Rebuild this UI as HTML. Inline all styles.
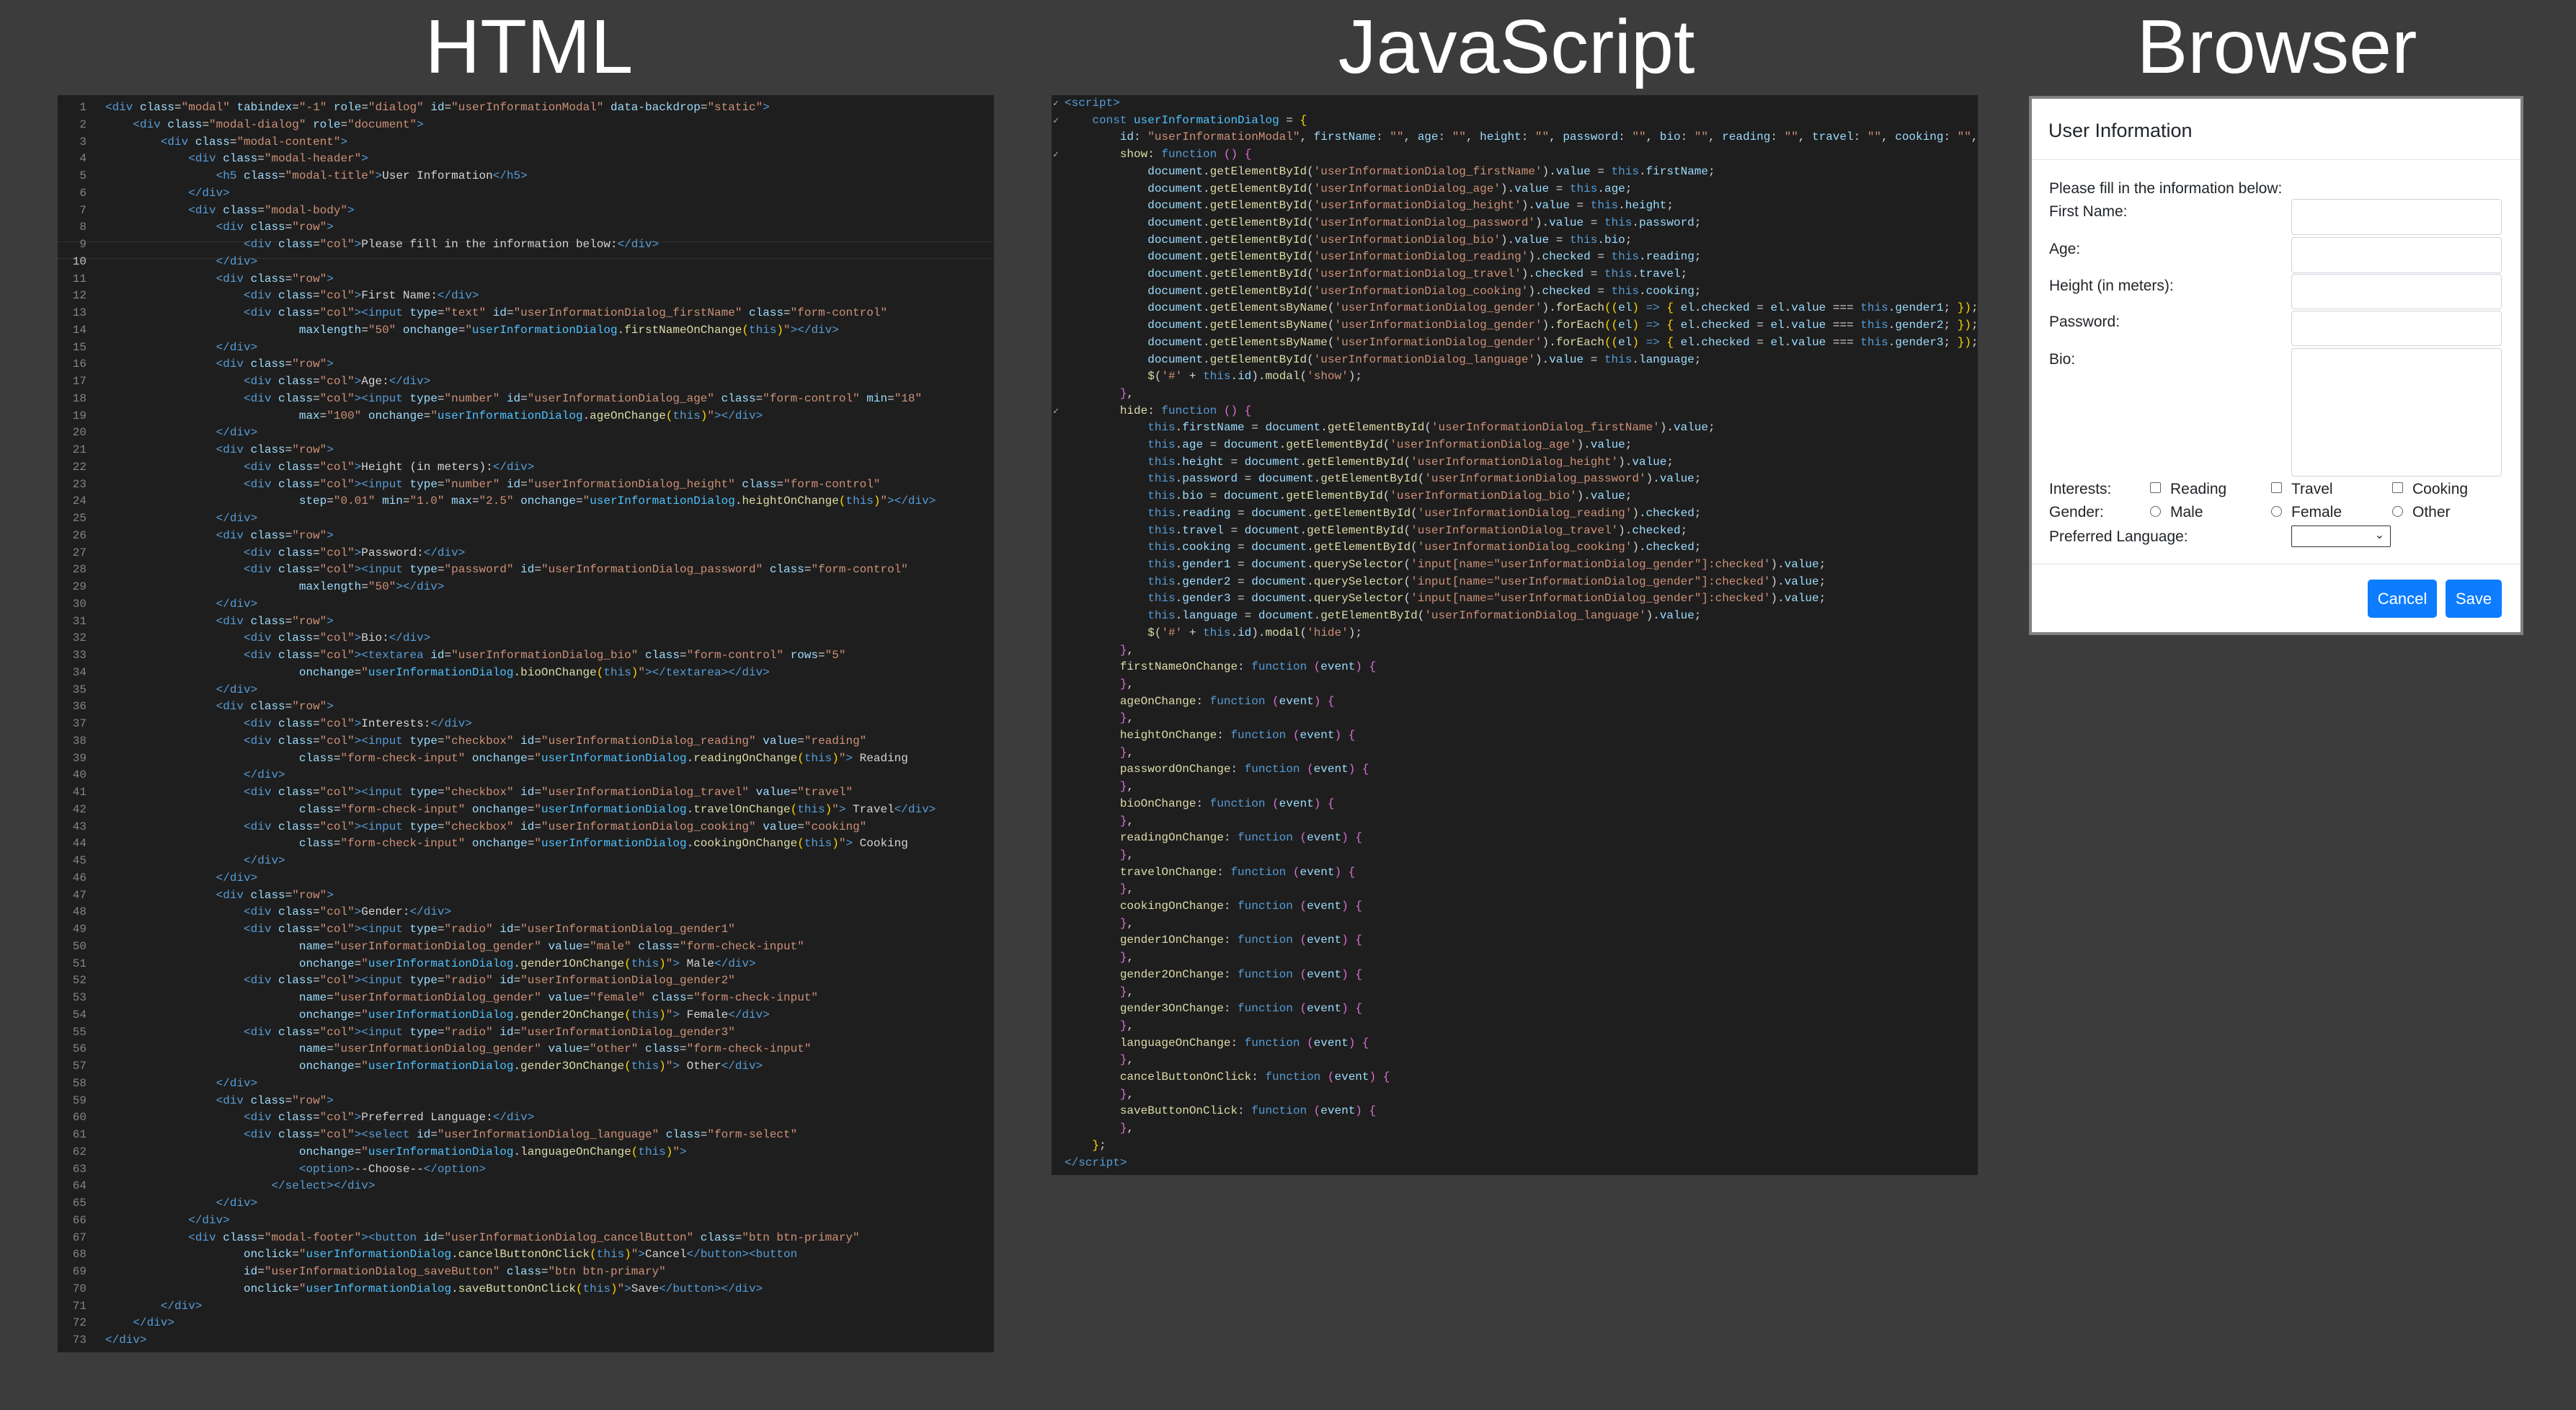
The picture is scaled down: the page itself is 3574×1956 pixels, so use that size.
<!DOCTYPE html>
<html><head><meta charset="utf-8">
<style>
*{margin:0;padding:0;box-sizing:border-box}
body{width:3574px;height:1956px;background:#3c3c3c;position:relative;overflow:hidden;font-family:"Liberation Sans",sans-serif}
.title{position:absolute;top:0px;color:#fff;font-size:106px;font-family:"Liberation Sans",sans-serif;line-height:130px;transform:translateX(-50%);white-space:nowrap}
.panel{position:absolute;background:#1e1e1e;overflow:hidden}
pre{font-family:"Liberation Mono",monospace;font-size:16px;color:#d4d4d4;white-space:pre;position:absolute}
tg{color:#569cd6}at{color:#9cdcfe}st{color:#ce9178}fn{color:#dcdcaa}vr{color:#4fc1ff}yb{color:#ffd700}pb{color:#da70d6}
.ln{color:#858585;text-align:right;width:40px}
.modal{position:absolute;left:2815px;top:133px;width:686px;height:748px;background:#808080;padding:4px}
.mi{background:#fff;width:100%;height:100%;position:relative;color:#212529;font-size:21px}
.mi div{position:absolute}
.inp{border:1px solid #ced4da;border-radius:4px;left:360px;width:292px}
.lab{left:24px}
.cb{width:15px;height:15px;border:1px solid #666;border-radius:2px}
.rb{width:15px;height:15px;border:1px solid #666;border-radius:50%}
.btn{background:#0d7cff;color:#fff;border-radius:5px;text-align:center;line-height:53px;font-size:22px}
</style></head><body>
<div class="title" style="left:734px">HTML</div>
<div class="title" style="left:2104px">JavaScript</div>
<div class="title" style="left:3159px">Browser</div>

<div class="panel" style="left:80px;top:132px;width:1299px;height:1744px">
<div style="position:absolute;left:0;top:203px;width:1299px;height:24px;border-top:1px solid #333;border-bottom:1px solid #333"></div>
<pre class="ln" style="left:0;top:6px;line-height:23.75px">1
2
3
4
5
6
7
8
9
<span style="color:#c6c6c6">10</span>
11
12
13
14
15
16
17
18
19
20
21
22
23
24
25
26
27
28
29
30
31
32
33
34
35
36
37
38
39
40
41
42
43
44
45
46
47
48
49
50
51
52
53
54
55
56
57
58
59
60
61
62
63
64
65
66
67
68
69
70
71
72
73</pre>
<pre style="left:66px;top:6px;line-height:23.75px"><tg>&lt;div</tg> <at>class</at>=<st>"modal"</st> <at>tabindex</at>=<st>"-1"</st> <at>role</at>=<st>"dialog"</st> <at>id</at>=<st>"userInformationModal"</st> <at>data-backdrop</at>=<st>"static"</st><tg>&gt;</tg>
    <tg>&lt;div</tg> <at>class</at>=<st>"modal-dialog"</st> <at>role</at>=<st>"document"</st><tg>&gt;</tg>
        <tg>&lt;div</tg> <at>class</at>=<st>"modal-content"</st><tg>&gt;</tg>
            <tg>&lt;div</tg> <at>class</at>=<st>"modal-header"</st><tg>&gt;</tg>
                <tg>&lt;h5</tg> <at>class</at>=<st>"modal-title"</st><tg>&gt;</tg>User Information<tg>&lt;/h5&gt;</tg>
            <tg>&lt;/div&gt;</tg>
            <tg>&lt;div</tg> <at>class</at>=<st>"modal-body"</st><tg>&gt;</tg>
                <tg>&lt;div</tg> <at>class</at>=<st>"row"</st><tg>&gt;</tg>
                    <tg>&lt;div</tg> <at>class</at>=<st>"col"</st><tg>&gt;</tg>Please fill in the information below:<tg>&lt;/div&gt;</tg>
                <tg>&lt;/div&gt;</tg>
                <tg>&lt;div</tg> <at>class</at>=<st>"row"</st><tg>&gt;</tg>
                    <tg>&lt;div</tg> <at>class</at>=<st>"col"</st><tg>&gt;</tg>First Name:<tg>&lt;/div&gt;</tg>
                    <tg>&lt;div</tg> <at>class</at>=<st>"col"</st><tg>&gt;&lt;input</tg> <at>type</at>=<st>"text"</st> <at>id</at>=<st>"userInformationDialog_firstName"</st> <at>class</at>=<st>"form-control"</st>
                            <at>maxlength</at>=<st>"50"</st> <at>onchange</at>=<st>"</st><vr>userInformationDialog</vr>.<fn>firstNameOnChange</fn><yb>(</yb><tg>this</tg><yb>)</yb><st>"</st><tg>&gt;&lt;/div&gt;</tg>
                <tg>&lt;/div&gt;</tg>
                <tg>&lt;div</tg> <at>class</at>=<st>"row"</st><tg>&gt;</tg>
                    <tg>&lt;div</tg> <at>class</at>=<st>"col"</st><tg>&gt;</tg>Age:<tg>&lt;/div&gt;</tg>
                    <tg>&lt;div</tg> <at>class</at>=<st>"col"</st><tg>&gt;&lt;input</tg> <at>type</at>=<st>"number"</st> <at>id</at>=<st>"userInformationDialog_age"</st> <at>class</at>=<st>"form-control"</st> <at>min</at>=<st>"18"</st>
                            <at>max</at>=<st>"100"</st> <at>onchange</at>=<st>"</st><vr>userInformationDialog</vr>.<fn>ageOnChange</fn><yb>(</yb><tg>this</tg><yb>)</yb><st>"</st><tg>&gt;&lt;/div&gt;</tg>
                <tg>&lt;/div&gt;</tg>
                <tg>&lt;div</tg> <at>class</at>=<st>"row"</st><tg>&gt;</tg>
                    <tg>&lt;div</tg> <at>class</at>=<st>"col"</st><tg>&gt;</tg>Height (in meters):<tg>&lt;/div&gt;</tg>
                    <tg>&lt;div</tg> <at>class</at>=<st>"col"</st><tg>&gt;&lt;input</tg> <at>type</at>=<st>"number"</st> <at>id</at>=<st>"userInformationDialog_height"</st> <at>class</at>=<st>"form-control"</st>
                            <at>step</at>=<st>"0.01"</st> <at>min</at>=<st>"1.0"</st> <at>max</at>=<st>"2.5"</st> <at>onchange</at>=<st>"</st><vr>userInformationDialog</vr>.<fn>heightOnChange</fn><yb>(</yb><tg>this</tg><yb>)</yb><st>"</st><tg>&gt;&lt;/div&gt;</tg>
                <tg>&lt;/div&gt;</tg>
                <tg>&lt;div</tg> <at>class</at>=<st>"row"</st><tg>&gt;</tg>
                    <tg>&lt;div</tg> <at>class</at>=<st>"col"</st><tg>&gt;</tg>Password:<tg>&lt;/div&gt;</tg>
                    <tg>&lt;div</tg> <at>class</at>=<st>"col"</st><tg>&gt;&lt;input</tg> <at>type</at>=<st>"password"</st> <at>id</at>=<st>"userInformationDialog_password"</st> <at>class</at>=<st>"form-control"</st>
                            <at>maxlength</at>=<st>"50"</st><tg>&gt;&lt;/div&gt;</tg>
                <tg>&lt;/div&gt;</tg>
                <tg>&lt;div</tg> <at>class</at>=<st>"row"</st><tg>&gt;</tg>
                    <tg>&lt;div</tg> <at>class</at>=<st>"col"</st><tg>&gt;</tg>Bio:<tg>&lt;/div&gt;</tg>
                    <tg>&lt;div</tg> <at>class</at>=<st>"col"</st><tg>&gt;&lt;textarea</tg> <at>id</at>=<st>"userInformationDialog_bio"</st> <at>class</at>=<st>"form-control"</st> <at>rows</at>=<st>"5"</st>
                            <at>onchange</at>=<st>"</st><vr>userInformationDialog</vr>.<fn>bioOnChange</fn><yb>(</yb><tg>this</tg><yb>)</yb><st>"</st><tg>&gt;&lt;/textarea&gt;&lt;/div&gt;</tg>
                <tg>&lt;/div&gt;</tg>
                <tg>&lt;div</tg> <at>class</at>=<st>"row"</st><tg>&gt;</tg>
                    <tg>&lt;div</tg> <at>class</at>=<st>"col"</st><tg>&gt;</tg>Interests:<tg>&lt;/div&gt;</tg>
                    <tg>&lt;div</tg> <at>class</at>=<st>"col"</st><tg>&gt;&lt;input</tg> <at>type</at>=<st>"checkbox"</st> <at>id</at>=<st>"userInformationDialog_reading"</st> <at>value</at>=<st>"reading"</st>
                            <at>class</at>=<st>"form-check-input"</st> <at>onchange</at>=<st>"</st><vr>userInformationDialog</vr>.<fn>readingOnChange</fn><yb>(</yb><tg>this</tg><yb>)</yb><st>"</st><tg>&gt;</tg> Reading
                    <tg>&lt;/div&gt;</tg>
                    <tg>&lt;div</tg> <at>class</at>=<st>"col"</st><tg>&gt;&lt;input</tg> <at>type</at>=<st>"checkbox"</st> <at>id</at>=<st>"userInformationDialog_travel"</st> <at>value</at>=<st>"travel"</st>
                            <at>class</at>=<st>"form-check-input"</st> <at>onchange</at>=<st>"</st><vr>userInformationDialog</vr>.<fn>travelOnChange</fn><yb>(</yb><tg>this</tg><yb>)</yb><st>"</st><tg>&gt;</tg> Travel<tg>&lt;/div&gt;</tg>
                    <tg>&lt;div</tg> <at>class</at>=<st>"col"</st><tg>&gt;&lt;input</tg> <at>type</at>=<st>"checkbox"</st> <at>id</at>=<st>"userInformationDialog_cooking"</st> <at>value</at>=<st>"cooking"</st>
                            <at>class</at>=<st>"form-check-input"</st> <at>onchange</at>=<st>"</st><vr>userInformationDialog</vr>.<fn>cookingOnChange</fn><yb>(</yb><tg>this</tg><yb>)</yb><st>"</st><tg>&gt;</tg> Cooking
                    <tg>&lt;/div&gt;</tg>
                <tg>&lt;/div&gt;</tg>
                <tg>&lt;div</tg> <at>class</at>=<st>"row"</st><tg>&gt;</tg>
                    <tg>&lt;div</tg> <at>class</at>=<st>"col"</st><tg>&gt;</tg>Gender:<tg>&lt;/div&gt;</tg>
                    <tg>&lt;div</tg> <at>class</at>=<st>"col"</st><tg>&gt;&lt;input</tg> <at>type</at>=<st>"radio"</st> <at>id</at>=<st>"userInformationDialog_gender1"</st>
                            <at>name</at>=<st>"userInformationDialog_gender"</st> <at>value</at>=<st>"male"</st> <at>class</at>=<st>"form-check-input"</st>
                            <at>onchange</at>=<st>"</st><vr>userInformationDialog</vr>.<fn>gender1OnChange</fn><yb>(</yb><tg>this</tg><yb>)</yb><st>"</st><tg>&gt;</tg> Male<tg>&lt;/div&gt;</tg>
                    <tg>&lt;div</tg> <at>class</at>=<st>"col"</st><tg>&gt;&lt;input</tg> <at>type</at>=<st>"radio"</st> <at>id</at>=<st>"userInformationDialog_gender2"</st>
                            <at>name</at>=<st>"userInformationDialog_gender"</st> <at>value</at>=<st>"female"</st> <at>class</at>=<st>"form-check-input"</st>
                            <at>onchange</at>=<st>"</st><vr>userInformationDialog</vr>.<fn>gender2OnChange</fn><yb>(</yb><tg>this</tg><yb>)</yb><st>"</st><tg>&gt;</tg> Female<tg>&lt;/div&gt;</tg>
                    <tg>&lt;div</tg> <at>class</at>=<st>"col"</st><tg>&gt;&lt;input</tg> <at>type</at>=<st>"radio"</st> <at>id</at>=<st>"userInformationDialog_gender3"</st>
                            <at>name</at>=<st>"userInformationDialog_gender"</st> <at>value</at>=<st>"other"</st> <at>class</at>=<st>"form-check-input"</st>
                            <at>onchange</at>=<st>"</st><vr>userInformationDialog</vr>.<fn>gender3OnChange</fn><yb>(</yb><tg>this</tg><yb>)</yb><st>"</st><tg>&gt;</tg> Other<tg>&lt;/div&gt;</tg>
                <tg>&lt;/div&gt;</tg>
                <tg>&lt;div</tg> <at>class</at>=<st>"row"</st><tg>&gt;</tg>
                    <tg>&lt;div</tg> <at>class</at>=<st>"col"</st><tg>&gt;</tg>Preferred Language:<tg>&lt;/div&gt;</tg>
                    <tg>&lt;div</tg> <at>class</at>=<st>"col"</st><tg>&gt;&lt;select</tg> <at>id</at>=<st>"userInformationDialog_language"</st> <at>class</at>=<st>"form-select"</st>
                            <at>onchange</at>=<st>"</st><vr>userInformationDialog</vr>.<fn>languageOnChange</fn><yb>(</yb><tg>this</tg><yb>)</yb><st>"</st><tg>&gt;</tg>
                            <tg>&lt;option&gt;</tg>--Choose--<tg>&lt;/option&gt;</tg>
                        <tg>&lt;/select&gt;&lt;/div&gt;</tg>
                <tg>&lt;/div&gt;</tg>
            <tg>&lt;/div&gt;</tg>
            <tg>&lt;div</tg> <at>class</at>=<st>"modal-footer"</st><tg>&gt;&lt;button</tg> <at>id</at>=<st>"userInformationDialog_cancelButton"</st> <at>class</at>=<st>"btn btn-primary"</st>
                    <at>onclick</at>=<st>"</st><vr>userInformationDialog</vr>.<fn>cancelButtonOnClick</fn><yb>(</yb><tg>this</tg><yb>)</yb><st>"</st><tg>&gt;</tg>Cancel<tg>&lt;/button&gt;&lt;button</tg>
                    <at>id</at>=<st>"userInformationDialog_saveButton"</st> <at>class</at>=<st>"btn btn-primary"</st>
                    <at>onclick</at>=<st>"</st><vr>userInformationDialog</vr>.<fn>saveButtonOnClick</fn><yb>(</yb><tg>this</tg><yb>)</yb><st>"</st><tg>&gt;</tg>Save<tg>&lt;/button&gt;&lt;/div&gt;</tg>
        <tg>&lt;/div&gt;</tg>
    <tg>&lt;/div&gt;</tg>
<tg>&lt;/div&gt;</tg></pre>
</div>

<div class="panel" style="left:1459px;top:132px;width:1285px;height:1498px">
<pre style="left:2px;top:0;line-height:23.7px;color:#b0b0b0;font-size:13px">✓
✓

✓














✓</pre>
<pre style="left:18px;top:0;line-height:23.7px"><tg>&lt;script&gt;</tg>
    <tg>const</tg> <vr>userInformationDialog</vr> = <yb>{</yb>
        <at>id</at>: <st>"userInformationModal"</st>, <at>firstName</at>: <st>""</st>, <at>age</at>: <st>""</st>, <at>height</at>: <st>""</st>, <at>password</at>: <st>""</st>, <at>bio</at>: <st>""</st>, <at>reading</at>: <st>""</st>, <at>travel</at>: <st>""</st>, <at>cooking</at>: <st>""</st>, <at>gender1</at>: <st>""</st>
        <fn>show</fn>: <tg>function</tg> <pb>()</pb> <pb>{</pb>
            <at>document</at>.<fn>getElementById</fn>(<st>'userInformationDialog_firstName'</st>).<at>value</at> = <tg>this</tg>.<at>firstName</at>;
            <at>document</at>.<fn>getElementById</fn>(<st>'userInformationDialog_age'</st>).<at>value</at> = <tg>this</tg>.<at>age</at>;
            <at>document</at>.<fn>getElementById</fn>(<st>'userInformationDialog_height'</st>).<at>value</at> = <tg>this</tg>.<at>height</at>;
            <at>document</at>.<fn>getElementById</fn>(<st>'userInformationDialog_password'</st>).<at>value</at> = <tg>this</tg>.<at>password</at>;
            <at>document</at>.<fn>getElementById</fn>(<st>'userInformationDialog_bio'</st>).<at>value</at> = <tg>this</tg>.<at>bio</at>;
            <at>document</at>.<fn>getElementById</fn>(<st>'userInformationDialog_reading'</st>).<at>checked</at> = <tg>this</tg>.<at>reading</at>;
            <at>document</at>.<fn>getElementById</fn>(<st>'userInformationDialog_travel'</st>).<at>checked</at> = <tg>this</tg>.<at>travel</at>;
            <at>document</at>.<fn>getElementById</fn>(<st>'userInformationDialog_cooking'</st>).<at>checked</at> = <tg>this</tg>.<at>cooking</at>;
            <at>document</at>.<fn>getElementsByName</fn>(<st>'userInformationDialog_gender'</st>).<fn>forEach</fn><yb>((</yb><at>el</at><yb>)</yb> <tg>=&gt;</tg> <yb>{</yb> <at>el</at>.<at>checked</at> = <at>el</at>.<at>value</at> === <tg>this</tg>.<at>gender1</at>; <yb>})</yb>;
            <at>document</at>.<fn>getElementsByName</fn>(<st>'userInformationDialog_gender'</st>).<fn>forEach</fn><yb>((</yb><at>el</at><yb>)</yb> <tg>=&gt;</tg> <yb>{</yb> <at>el</at>.<at>checked</at> = <at>el</at>.<at>value</at> === <tg>this</tg>.<at>gender2</at>; <yb>})</yb>;
            <at>document</at>.<fn>getElementsByName</fn>(<st>'userInformationDialog_gender'</st>).<fn>forEach</fn><yb>((</yb><at>el</at><yb>)</yb> <tg>=&gt;</tg> <yb>{</yb> <at>el</at>.<at>checked</at> = <at>el</at>.<at>value</at> === <tg>this</tg>.<at>gender3</at>; <yb>})</yb>;
            <at>document</at>.<fn>getElementById</fn>(<st>'userInformationDialog_language'</st>).<at>value</at> = <tg>this</tg>.<at>language</at>;
            <fn>$</fn>(<st>'#'</st> + <tg>this</tg>.<at>id</at>).<fn>modal</fn>(<st>'show'</st>);
        <pb>}</pb>,
        <fn>hide</fn>: <tg>function</tg> <pb>()</pb> <pb>{</pb>
            <tg>this</tg>.<at>firstName</at> = <at>document</at>.<fn>getElementById</fn>(<st>'userInformationDialog_firstName'</st>).<at>value</at>;
            <tg>this</tg>.<at>age</at> = <at>document</at>.<fn>getElementById</fn>(<st>'userInformationDialog_age'</st>).<at>value</at>;
            <tg>this</tg>.<at>height</at> = <at>document</at>.<fn>getElementById</fn>(<st>'userInformationDialog_height'</st>).<at>value</at>;
            <tg>this</tg>.<at>password</at> = <at>document</at>.<fn>getElementById</fn>(<st>'userInformationDialog_password'</st>).<at>value</at>;
            <tg>this</tg>.<at>bio</at> = <at>document</at>.<fn>getElementById</fn>(<st>'userInformationDialog_bio'</st>).<at>value</at>;
            <tg>this</tg>.<at>reading</at> = <at>document</at>.<fn>getElementById</fn>(<st>'userInformationDialog_reading'</st>).<at>checked</at>;
            <tg>this</tg>.<at>travel</at> = <at>document</at>.<fn>getElementById</fn>(<st>'userInformationDialog_travel'</st>).<at>checked</at>;
            <tg>this</tg>.<at>cooking</at> = <at>document</at>.<fn>getElementById</fn>(<st>'userInformationDialog_cooking'</st>).<at>checked</at>;
            <tg>this</tg>.<at>gender1</at> = <at>document</at>.<fn>querySelector</fn>(<st>'input[name="userInformationDialog_gender"]:checked'</st>).<at>value</at>;
            <tg>this</tg>.<at>gender2</at> = <at>document</at>.<fn>querySelector</fn>(<st>'input[name="userInformationDialog_gender"]:checked'</st>).<at>value</at>;
            <tg>this</tg>.<at>gender3</at> = <at>document</at>.<fn>querySelector</fn>(<st>'input[name="userInformationDialog_gender"]:checked'</st>).<at>value</at>;
            <tg>this</tg>.<at>language</at> = <at>document</at>.<fn>getElementById</fn>(<st>'userInformationDialog_language'</st>).<at>value</at>;
            <fn>$</fn>(<st>'#'</st> + <tg>this</tg>.<at>id</at>).<fn>modal</fn>(<st>'hide'</st>);
        <pb>}</pb>,
        <fn>firstNameOnChange</fn>: <tg>function</tg> <pb>(</pb><at>event</at><pb>)</pb> <pb>{</pb>
        <pb>}</pb>,
        <fn>ageOnChange</fn>: <tg>function</tg> <pb>(</pb><at>event</at><pb>)</pb> <pb>{</pb>
        <pb>}</pb>,
        <fn>heightOnChange</fn>: <tg>function</tg> <pb>(</pb><at>event</at><pb>)</pb> <pb>{</pb>
        <pb>}</pb>,
        <fn>passwordOnChange</fn>: <tg>function</tg> <pb>(</pb><at>event</at><pb>)</pb> <pb>{</pb>
        <pb>}</pb>,
        <fn>bioOnChange</fn>: <tg>function</tg> <pb>(</pb><at>event</at><pb>)</pb> <pb>{</pb>
        <pb>}</pb>,
        <fn>readingOnChange</fn>: <tg>function</tg> <pb>(</pb><at>event</at><pb>)</pb> <pb>{</pb>
        <pb>}</pb>,
        <fn>travelOnChange</fn>: <tg>function</tg> <pb>(</pb><at>event</at><pb>)</pb> <pb>{</pb>
        <pb>}</pb>,
        <fn>cookingOnChange</fn>: <tg>function</tg> <pb>(</pb><at>event</at><pb>)</pb> <pb>{</pb>
        <pb>}</pb>,
        <fn>gender1OnChange</fn>: <tg>function</tg> <pb>(</pb><at>event</at><pb>)</pb> <pb>{</pb>
        <pb>}</pb>,
        <fn>gender2OnChange</fn>: <tg>function</tg> <pb>(</pb><at>event</at><pb>)</pb> <pb>{</pb>
        <pb>}</pb>,
        <fn>gender3OnChange</fn>: <tg>function</tg> <pb>(</pb><at>event</at><pb>)</pb> <pb>{</pb>
        <pb>}</pb>,
        <fn>languageOnChange</fn>: <tg>function</tg> <pb>(</pb><at>event</at><pb>)</pb> <pb>{</pb>
        <pb>}</pb>,
        <fn>cancelButtonOnClick</fn>: <tg>function</tg> <pb>(</pb><at>event</at><pb>)</pb> <pb>{</pb>
        <pb>}</pb>,
        <fn>saveButtonOnClick</fn>: <tg>function</tg> <pb>(</pb><at>event</at><pb>)</pb> <pb>{</pb>
        <pb>}</pb>,
    <yb>}</yb>;
<tg>&lt;/script&gt;</tg></pre>
</div>

<div class="modal">
<div class="mi">
<div style="left:23px;top:29px;font-size:27px">User Information</div>
<div style="left:0;right:0;top:84px;border-top:1px solid #dee2e6"></div>
<div class="lab" style="top:113px">Please fill in the information below:</div>
<div class="lab" style="top:145px">First Name:</div>
<div class="inp" style="top:139px;height:50px"></div>
<div class="lab" style="top:197px">Age:</div>
<div class="inp" style="top:192px;height:50px"></div>
<div class="lab" style="top:248px">Height (in meters):</div>
<div class="inp" style="top:243px;height:49px"></div>
<div class="lab" style="top:298px">Password:</div>
<div class="inp" style="top:294px;height:49px"></div>
<div class="lab" style="top:350px">Bio:</div>
<div class="inp" style="top:346px;height:178px"></div>
<div class="lab" style="top:530px">Interests:</div>
<div class="cb" style="left:164px;top:532px"></div><div style="left:192px;top:530px">Reading</div>
<div class="cb" style="left:332px;top:532px"></div><div style="left:360px;top:530px">Travel</div>
<div class="cb" style="left:500px;top:532px"></div><div style="left:528px;top:530px">Cooking</div>
<div class="lab" style="top:562px">Gender:</div>
<div class="rb" style="left:164px;top:565px"></div><div style="left:192px;top:562px">Male</div>
<div class="rb" style="left:332px;top:565px"></div><div style="left:360px;top:562px">Female</div>
<div class="rb" style="left:500px;top:565px"></div><div style="left:528px;top:562px">Other</div>
<div class="lab" style="top:596px">Preferred Language:</div>
<div style="left:360px;top:592px;width:138px;height:30px;border:1px solid #333;border-radius:2px"><span style="position:absolute;right:8px;top:2px;font-size:16px">&#8964;</span></div>
<div style="left:0;right:0;top:645px;border-top:1px solid #dee2e6"></div>
<div class="btn" style="left:466px;top:667px;width:96px;height:53px">Cancel</div>
<div class="btn" style="left:574px;top:667px;width:78px;height:53px">Save</div>
</div></div>
</body></html>
